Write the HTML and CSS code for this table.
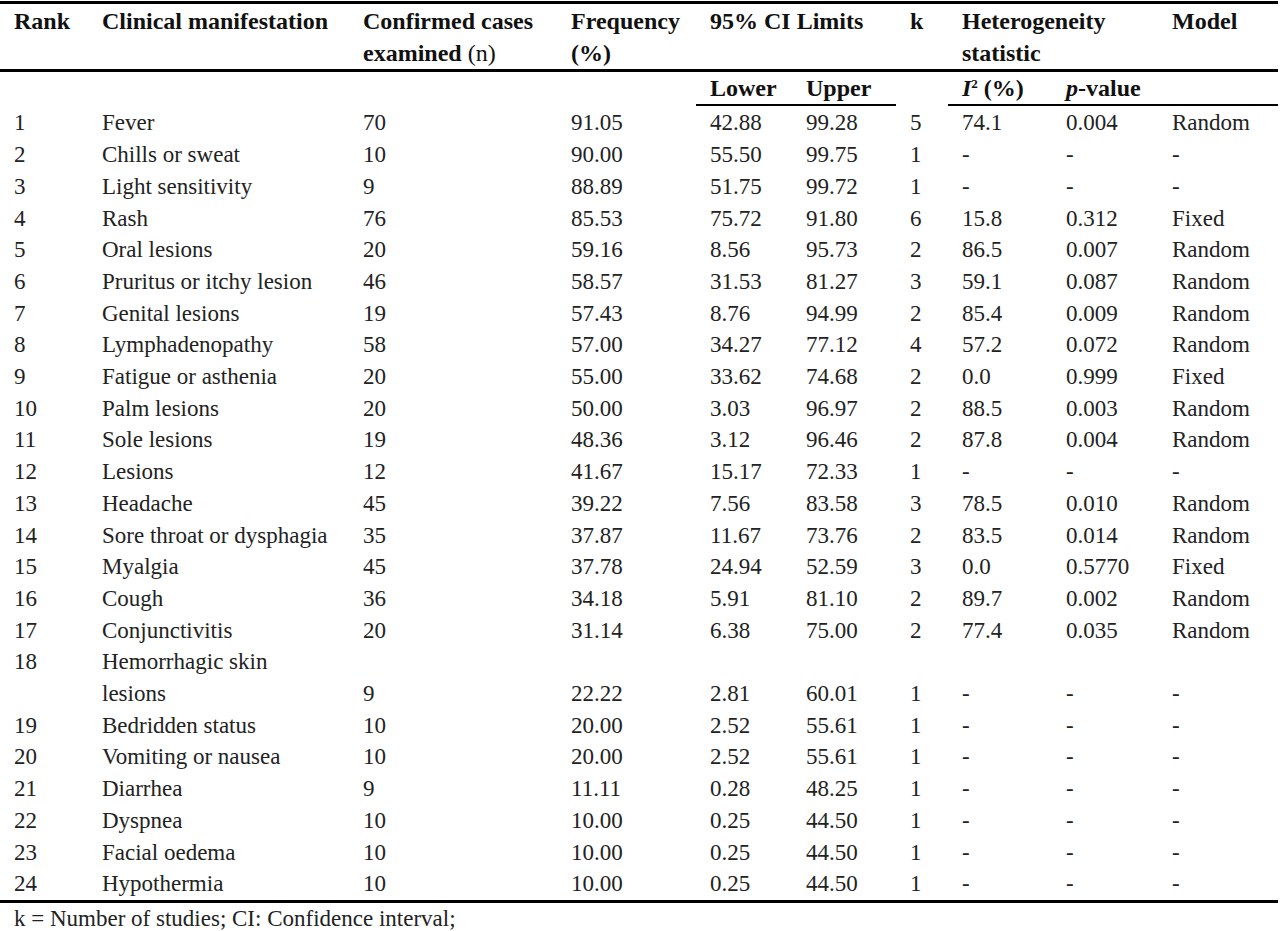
FILE: index.html
```html
<!DOCTYPE html>
<html lang="en">
<head>
<meta charset="utf-8">
<title>Clinical manifestations</title>
<link rel="stylesheet" href="styles.css">
</head>
<body>
<div class="page">
<table class="results">
  <colgroup>
    <col class="c-rank"><col class="c-name"><col class="c-n"><col class="c-freq">
    <col class="c-low"><col class="c-up"><col class="c-k"><col class="c-i2">
    <col class="c-p"><col class="c-model">
  </colgroup>
  <thead>
    <tr class="head-main">
      <th>Rank</th>
      <th>Clinical manifestation</th>
      <th>Confirmed cases<br>examined <span class="plain">(n)</span></th>
      <th>Frequency<br>(%)</th>
      <th colspan="2">95% CI Limits</th>
      <th>k</th>
      <th colspan="2">Heterogeneity<br>statistic</th>
      <th>Model</th>
    </tr>
    <tr class="head-sub">
      <th></th><th></th><th></th><th></th>
      <th class="rule-a">Lower</th>
      <th class="rule-a">Upper</th>
      <th></th>
      <th class="rule-b"><i>I</i><sup>2</sup> (%)</th>
      <th class="rule-b"><i>p</i>-value</th>
      <th class="rule-b"></th>
    </tr>
  </thead>
  <tbody>
    <tr><td>1</td><td>Fever</td><td>70</td><td>91.05</td><td>42.88</td><td>99.28</td><td>5</td><td>74.1</td><td>0.004</td><td>Random</td></tr>
    <tr><td>2</td><td>Chills or sweat</td><td>10</td><td>90.00</td><td>55.50</td><td>99.75</td><td>1</td><td>-</td><td>-</td><td>-</td></tr>
    <tr><td>3</td><td>Light sensitivity</td><td>9</td><td>88.89</td><td>51.75</td><td>99.72</td><td>1</td><td>-</td><td>-</td><td>-</td></tr>
    <tr><td>4</td><td>Rash</td><td>76</td><td>85.53</td><td>75.72</td><td>91.80</td><td>6</td><td>15.8</td><td>0.312</td><td>Fixed</td></tr>
    <tr><td>5</td><td>Oral lesions</td><td>20</td><td>59.16</td><td>8.56</td><td>95.73</td><td>2</td><td>86.5</td><td>0.007</td><td>Random</td></tr>
    <tr><td>6</td><td>Pruritus or itchy lesion</td><td>46</td><td>58.57</td><td>31.53</td><td>81.27</td><td>3</td><td>59.1</td><td>0.087</td><td>Random</td></tr>
    <tr><td>7</td><td>Genital lesions</td><td>19</td><td>57.43</td><td>8.76</td><td>94.99</td><td>2</td><td>85.4</td><td>0.009</td><td>Random</td></tr>
    <tr><td>8</td><td>Lymphadenopathy</td><td>58</td><td>57.00</td><td>34.27</td><td>77.12</td><td>4</td><td>57.2</td><td>0.072</td><td>Random</td></tr>
    <tr><td>9</td><td>Fatigue or asthenia</td><td>20</td><td>55.00</td><td>33.62</td><td>74.68</td><td>2</td><td>0.0</td><td>0.999</td><td>Fixed</td></tr>
    <tr><td>10</td><td>Palm lesions</td><td>20</td><td>50.00</td><td>3.03</td><td>96.97</td><td>2</td><td>88.5</td><td>0.003</td><td>Random</td></tr>
    <tr><td>11</td><td>Sole lesions</td><td>19</td><td>48.36</td><td>3.12</td><td>96.46</td><td>2</td><td>87.8</td><td>0.004</td><td>Random</td></tr>
    <tr><td>12</td><td>Lesions</td><td>12</td><td>41.67</td><td>15.17</td><td>72.33</td><td>1</td><td>-</td><td>-</td><td>-</td></tr>
    <tr><td>13</td><td>Headache</td><td>45</td><td>39.22</td><td>7.56</td><td>83.58</td><td>3</td><td>78.5</td><td>0.010</td><td>Random</td></tr>
    <tr><td>14</td><td>Sore throat or dysphagia</td><td>35</td><td>37.87</td><td>11.67</td><td>73.76</td><td>2</td><td>83.5</td><td>0.014</td><td>Random</td></tr>
    <tr><td>15</td><td>Myalgia</td><td>45</td><td>37.78</td><td>24.94</td><td>52.59</td><td>3</td><td>0.0</td><td>0.5770</td><td>Fixed</td></tr>
    <tr><td>16</td><td>Cough</td><td>36</td><td>34.18</td><td>5.91</td><td>81.10</td><td>2</td><td>89.7</td><td>0.002</td><td>Random</td></tr>
    <tr><td>17</td><td>Conjunctivitis</td><td>20</td><td>31.14</td><td>6.38</td><td>75.00</td><td>2</td><td>77.4</td><td>0.035</td><td>Random</td></tr>
    <tr class="tall"><td class="top">18</td><td>Hemorrhagic skin<br>lesions</td><td>9</td><td>22.22</td><td>2.81</td><td>60.01</td><td>1</td><td>-</td><td>-</td><td>-</td></tr>
    <tr><td>19</td><td>Bedridden status</td><td>10</td><td>20.00</td><td>2.52</td><td>55.61</td><td>1</td><td>-</td><td>-</td><td>-</td></tr>
    <tr><td>20</td><td>Vomiting or nausea</td><td>10</td><td>20.00</td><td>2.52</td><td>55.61</td><td>1</td><td>-</td><td>-</td><td>-</td></tr>
    <tr><td>21</td><td>Diarrhea</td><td>9</td><td>11.11</td><td>0.28</td><td>48.25</td><td>1</td><td>-</td><td>-</td><td>-</td></tr>
    <tr><td>22</td><td>Dyspnea</td><td>10</td><td>10.00</td><td>0.25</td><td>44.50</td><td>1</td><td>-</td><td>-</td><td>-</td></tr>
    <tr><td>23</td><td>Facial oedema</td><td>10</td><td>10.00</td><td>0.25</td><td>44.50</td><td>1</td><td>-</td><td>-</td><td>-</td></tr>
    <tr class="last"><td>24</td><td>Hypothermia</td><td>10</td><td>10.00</td><td>0.25</td><td>44.50</td><td>1</td><td>-</td><td>-</td><td>-</td></tr>
  </tbody>
</table>
<p class="note">k = Number of studies; CI: Confidence interval;</p>
</div>
</body>
</html>
```

FILE: styles.css
```css
html, body {
  margin: 0;
  padding: 0;
  background: #ffffff;
}

.page {
  width: 1280px;
  padding-top: 1px;
  font-family: "Liberation Serif", "Times New Roman", serif;
  color: #222222;
}

.results {
  width: 1278px;
  table-layout: fixed;
  border-collapse: collapse;
  border-top: 3px solid #000;
  font-size: 23px;
  line-height: 31.7px;
}

.c-rank { width: 88px; }
.c-name { width: 261px; }
.c-n { width: 208px; }
.c-freq { width: 139px; }
.c-low { width: 96px; }
.c-up { width: 104px; }
.c-k { width: 52px; }
.c-i2 { width: 104px; }
.c-p { width: 106px; }
.c-model { width: 120px; }

.results th,
.results td {
  padding: 0 0 0 14px;
  text-align: left;
  vertical-align: bottom;
  white-space: nowrap;
}

.results th {
  font-size: 24px;
  font-weight: bold;
  color: #111;
  vertical-align: top;
}

.head-main th {
  border-bottom: 3px solid #000;
  padding-top: 2px;
}

.head-sub th {
  line-height: 32px;
}

.head-sub .rule-a,
.head-sub .rule-b {
  border-bottom: 2px solid #000;
}

.plain {
  font-weight: normal;
}

.results sup {
  font-size: 13px;
  line-height: 0;
  vertical-align: 8px;
}

.results tbody tr:first-child td {
  padding-top: 1px;
}

.results td.top {
  vertical-align: top;
}

.last td {
  border-bottom: 3px solid #000;
}

.note {
  margin: 0;
  padding-left: 14px;
  font-size: 23px;
  line-height: 31px;
}
```
